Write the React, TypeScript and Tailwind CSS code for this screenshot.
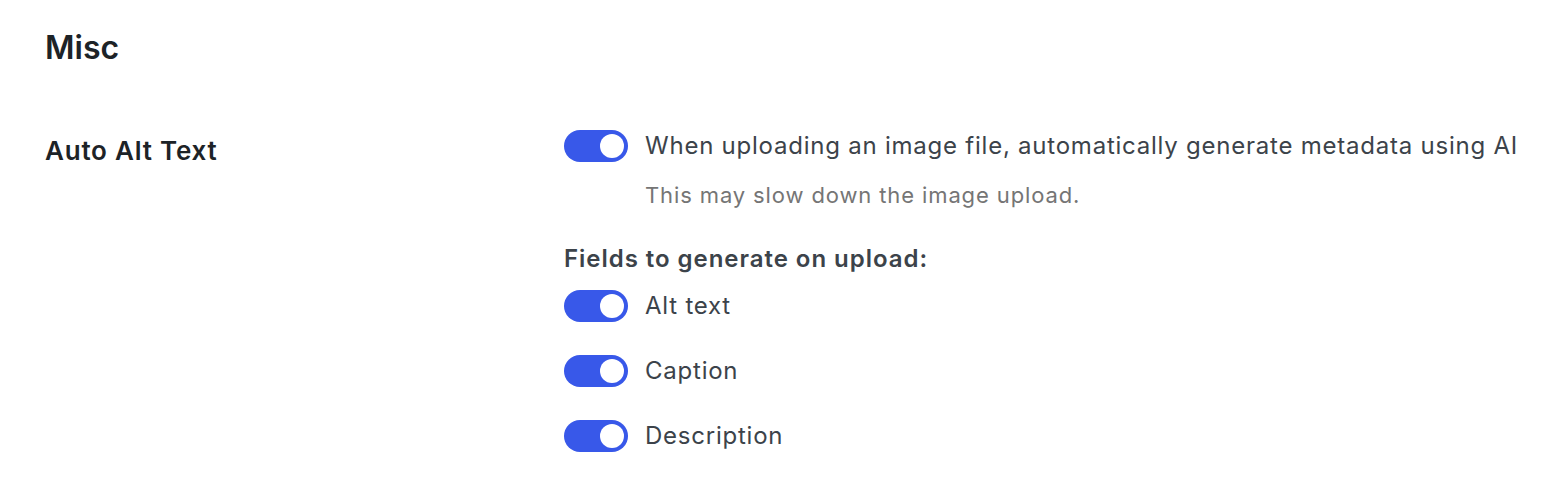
function Toggle() {
  return (
    <span className="relative inline-flex h-[32px] w-[64px] shrink-0 items-center rounded-full bg-[#3858e9]">
      <span className="absolute right-[4px] top-[4px] h-[24px] w-[24px] rounded-full bg-white" />
    </span>
  );
}

function ToggleRow({ label }: { label: string }) {
  return (
    <label className="flex items-center gap-[17px]">
      <Toggle />
      <span className="text-[24px] leading-[32px] tracking-[0.032em] text-[#3c434a]">{label}</span>
    </label>
  );
}

export default function App() {
  return (
    <div className="min-h-screen bg-white pl-[45px] pt-[28px] font-['Inter','Liberation_Sans',sans-serif] antialiased">
      <h2 className="text-[32px] leading-[40px] font-semibold text-[#1d2327]">Misc</h2>

      <div className="mt-[62px] flex">
        <div className="w-[519px] shrink-0 pt-[4px]">
          <h3 className="text-[26px] leading-[34px] font-semibold tracking-[0.03em] text-[#1d2327]">Auto Alt Text</h3>
        </div>

        <div className="flex flex-col">
          <ToggleRow label="When uploading an image file, automatically generate metadata using AI" />
          <p className="mt-[18px] pl-[81px] text-[22px] leading-[30px] tracking-[0.04em] text-[#757575]">
            This may slow down the image upload.
          </p>

          <p className="mt-[33px] text-[24px] leading-[32px] font-semibold tracking-[0.04em] text-[#3c434a]">
            Fields to generate on upload:
          </p>
          <div className="mt-[15px] flex flex-col gap-[33px]">
            <ToggleRow label="Alt text" />
            <ToggleRow label="Caption" />
            <ToggleRow label="Description" />
          </div>
        </div>
      </div>
    </div>
  );
}
